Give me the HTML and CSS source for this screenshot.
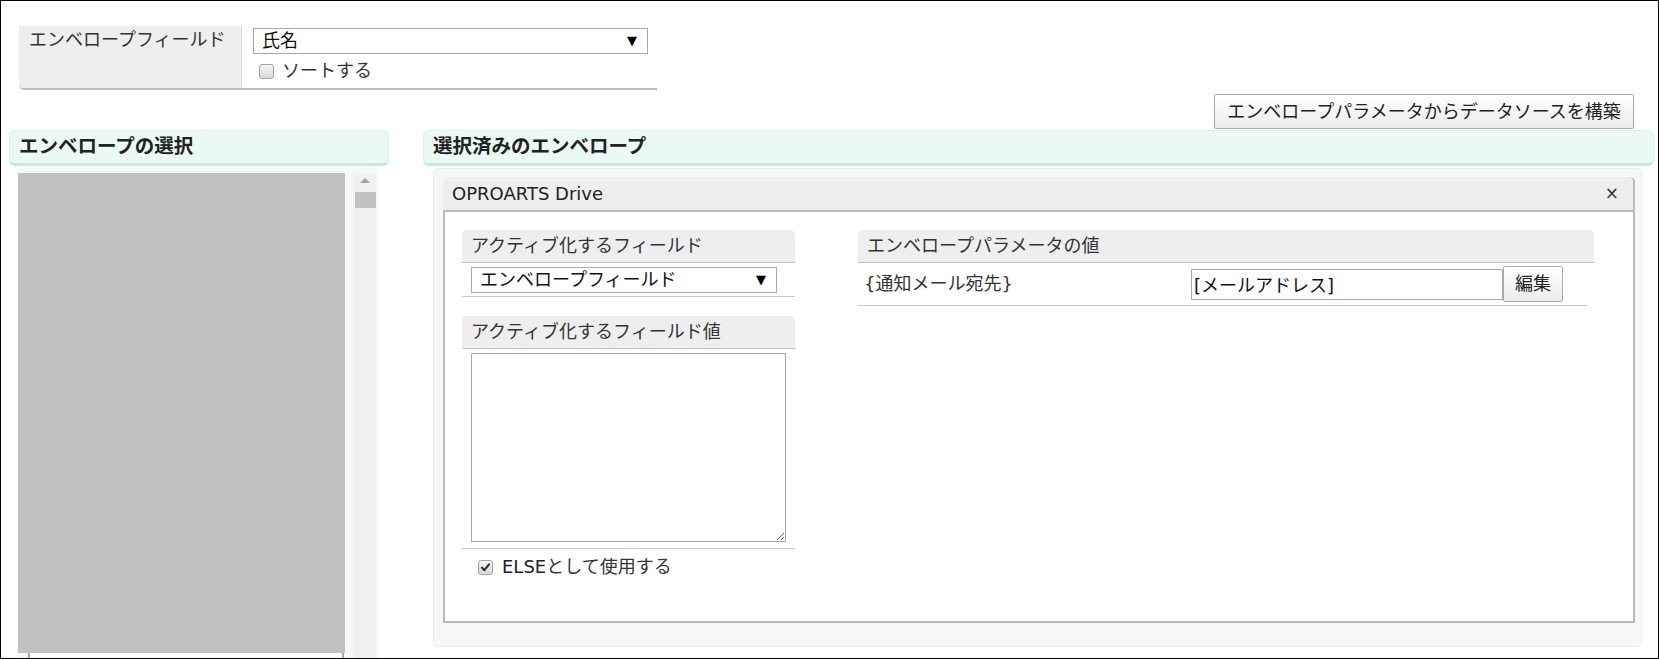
FILE: index.html
```html
<!DOCTYPE html>
<html lang="ja">
<head>
<meta charset="utf-8">
<title>エンベロープ</title>
<link rel="stylesheet" href="styles.css">
</head>
<body>
<div class="page">
  <div class="top-form">
    <div class="tf-label">エンベロープフィールド</div>
    <div class="tf-value">
      <div class="select select-top"><span class="select-text">氏名</span><span class="select-arrow">▼</span></div>
      <div class="check-row sort-row"><span class="checkbox"></span><span class="check-text">ソートする</span></div>
    </div>
  </div>
  <div class="toolbar">
    <button class="btn btn-build">エンベロープパラメータからデータソースを構築</button>
  </div>
  <div class="columns">
    <section class="col-left">
      <h2 class="sec-head">エンベロープの選択</h2>
      <div class="left-body">
        <div class="list-wrap">
          <div class="list-box"></div>
          <div class="list-next"></div>
        </div>
        <div class="scroll-track">
          <span class="scroll-up"></span>
          <span class="scroll-thumb"></span>
        </div>
      </div>
    </section>
    <section class="col-right">
      <h2 class="sec-head">選択済みのエンベロープ</h2>
      <div class="right-body">
        <div class="dialog">
          <div class="dlg-head"><span class="dlg-title">OPROARTS Drive</span><span class="dlg-close">×</span></div>
          <div class="dlg-body">
            <div class="dlg-left">
              <div class="field-head">アクティブ化するフィールド</div>
              <div class="field-area">
                <div class="select select-field"><span class="select-text">エンベロープフィールド</span><span class="select-arrow">▼</span></div>
              </div>
              <div class="field-head field-head-2">アクティブ化するフィールド値</div>
              <div class="field-area field-area-2">
                <textarea class="textarea"></textarea>
              </div>
              <div class="check-row else-row">
                <span class="checkbox checked"><svg viewBox="0 0 15 15" width="15" height="15"><path d="M3.5 7.6 L6.2 10.6 L11.6 3.8" fill="none" stroke="#2b2b2b" stroke-width="2.4" stroke-linecap="round" stroke-linejoin="round"/></svg></span>
                <span class="check-text"><span class="latin">ELSE</span>として使用する</span>
              </div>
            </div>
            <div class="dlg-right">
              <div class="field-head">エンベロープパラメータの値</div>
              <div class="param-row">
                <span class="param-name">{通知メール宛先}</span>
                <input class="text-input" type="text" value="[メールアドレス]">
                <button class="btn btn-edit">編集</button>
              </div>
            </div>
          </div>
        </div>
      </div>
    </section>
  </div>
</div>
</body>
</html>
```

FILE: styles.css
```css
* { box-sizing: border-box; }

html, body {
  margin: 0;
  padding: 0;
  background: #ffffff;
}

body {
  font-family: "DejaVu Sans", "Noto Sans CJK JP", sans-serif;
  font-size: 18px;
  color: #333333;
}

.page {
  width: 1659px;
  height: 659px;
  border: 1px solid #000000;
  overflow: hidden;
}

/* ---------- top form ---------- */
.top-form {
  display: flex;
  width: 638px;
  height: 64px;
  margin: 25px 0 0 18px;
  border-bottom: 2px solid #bdbdbd;
  border-bottom-left-radius: 5px;
}

.tf-label {
  width: 223px;
  background: #eeeeee;
  border-right: 1px solid #dddddd;
  border-bottom-left-radius: 4px;
  padding: 3px 0 0 10px;
  line-height: 22px;
  color: #333333;
}

.tf-value {
  flex: 1;
  padding: 2px 9px 0 11px;
}

.select {
  display: flex;
  align-items: center;
  justify-content: space-between;
  height: 26px;
  border: 1px solid #a9a9a9;
  background: #ffffff;
  padding: 0 10px 0 8px;
  line-height: 24px;
  color: #111111;
}

.select-top { width: 395px; }

.select-arrow {
  font-size: 13px;
  color: #000000;
}

.check-row {
  display: flex;
  align-items: center;
}

.sort-row {
  height: 30px;
  margin-top: 2px;
  padding-left: 6px;
}

.checkbox {
  display: inline-flex;
  align-items: center;
  justify-content: center;
  width: 15px;
  height: 15px;
  border: 1px solid #a3a3a3;
  border-radius: 3px;
  background: linear-gradient(#f6f6f6, #d8d8d8);
  flex: none;
}

.checkbox svg { display: block; }

.sort-row .checkbox { margin-right: 8px; }

.check-text {
  line-height: 24px;
  color: #333333;
}

/* ---------- toolbar ---------- */
.toolbar {
  display: flex;
  justify-content: flex-end;
  height: 40px;
  padding: 4px 24px 0 0;
}

.btn {
  font-family: "DejaVu Sans", "Noto Sans CJK JP", sans-serif;
  font-size: 18px;
  color: #222222;
  border: 1px solid #adadad;
  border-radius: 2px;
  background: linear-gradient(#ffffff, #ececec);
  padding: 0;
  margin: 0;
}

.btn-build {
  width: 420px;
  height: 35px;
  line-height: 33px;
}

/* ---------- columns ---------- */
.columns {
  display: flex;
  gap: 34px;
  padding-left: 8px;
}

.sec-head {
  margin: 0;
  height: 36px;
  padding-left: 9px;
  font-size: 19.5px;
  font-weight: bold;
  line-height: 31px;
  color: #222222;
  background: #eaf9f4;
  border: 1px solid #d3f3e8;
  border-bottom: 3px solid #bdeedc;
  border-radius: 6px;
}

.col-left { width: 380px; }

.col-right { width: 1231px; }

.left-body {
  display: flex;
  width: 361px;
  height: 500px;
  margin: 1px 0 0 8px;
  padding: 6px 2px 0 1px;
  background: #f7f7f7;
  border-top-left-radius: 4px;
  border-top-right-radius: 4px;
}

.list-wrap { width: 327px; }

.list-box {
  height: 480px;
  background: #c1c1c1;
}

.list-next {
  width: 316px;
  height: 20px;
  margin-left: 10px;
  border-left: 2px solid #a8a8a8;
  border-right: 2px solid #a8a8a8;
  background: #ffffff;
}

.scroll-track {
  display: flex;
  flex-direction: column;
  align-items: center;
  width: 23px;
  margin-left: 8px;
  background: #f1f1f1;
}

.scroll-up {
  width: 0;
  height: 0;
  margin-top: 5px;
  border-left: 5px solid transparent;
  border-right: 5px solid transparent;
  border-bottom: 5px solid #a3a3a3;
}

.scroll-thumb {
  width: 21px;
  height: 16px;
  margin-top: 9px;
  margin-left: 2px;
  background: #c1c1c1;
}

/* ---------- right side ---------- */
.right-body {
  width: 1209px;
  height: 479px;
  margin: 2px 0 0 10px;
  padding: 8px 0 0 9px;
  background: #f7f7f7;
  border: 1px solid #ececec;
  border-radius: 5px;
}

.dialog { width: 1192px; }

.dlg-head {
  display: flex;
  justify-content: space-between;
  height: 33px;
  padding: 0 14px 0 9px;
  line-height: 33px;
  background: #eeeeee;
  border-right: 2px solid #bcbcbc;
  border-top-left-radius: 5px;
  border-top-right-radius: 5px;
  color: #222222;
}

.dlg-close {
  font-size: 17px;
  color: #333333;
}

.dlg-body {
  display: flex;
  height: 413px;
  padding: 18px 0 0 17px;
  background: #ffffff;
  border: 2px solid #bababa;
}

.dlg-left { width: 333px; }

.field-head {
  height: 33px;
  padding-left: 9px;
  line-height: 32px;
  background: #eeeeee;
  border-bottom: 1px solid #c4c4c4;
  border-top-left-radius: 5px;
  border-top-right-radius: 5px;
  color: #333333;
}

.field-area {
  padding: 4px 0 3px 9px;
  border-bottom: 1px solid #c8c8c8;
}

.select-field { width: 306px; }

.field-head-2 { margin-top: 19px; }

.field-area-2 { padding-bottom: 6px; }

.textarea {
  display: block;
  width: 315px;
  height: 189px;
  margin: 0;
  border: 1px solid #a9a9a9;
  background: #ffffff;
  resize: both;
  font-family: "DejaVu Sans", "Noto Sans CJK JP", sans-serif;
  font-size: 18px;
}

.else-row {
  height: 36px;
  padding: 0 0 0 16px;
}

.else-row .checkbox { margin-right: 9px; }

.latin { color: #222222; }

.dlg-right {
  width: 736px;
  margin-left: 63px;
}

.param-row {
  display: flex;
  align-items: center;
  width: 729px;
  height: 43px;
  padding: 0;
  border-bottom: 1px solid #c8c8c8;
}

.param-name {
  width: 333px;
  padding-left: 6px;
  line-height: 24px;
  color: #333333;
}

.text-input {
  width: 312px;
  height: 31px;
  margin: 0;
  padding: 0 0 0 2px;
  border: 1px solid #a9a9a9;
  font-family: "DejaVu Sans", "Noto Sans CJK JP", sans-serif;
  font-size: 18px;
  color: #111111;
  background: #ffffff;
}

.btn-edit {
  width: 60px;
  height: 36px;
  line-height: 34px;
}
```
